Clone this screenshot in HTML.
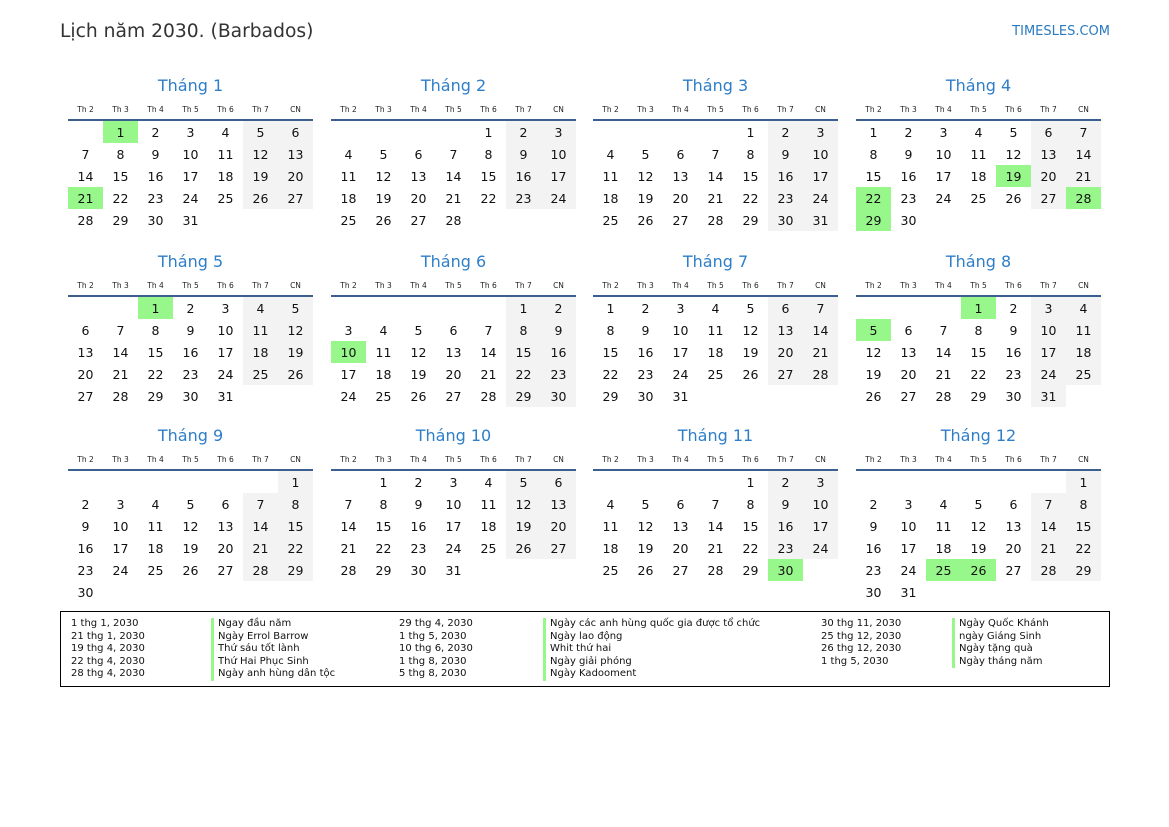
<!DOCTYPE html><html><head><meta charset="utf-8"><style>
body{margin:0;width:1169px;height:827px;background:#fff;font-family:"DejaVu Sans","Liberation Sans",sans-serif;color:#111;position:relative;overflow:hidden}
.t{position:absolute;left:60px;top:21px;font-size:18.7px;color:#333}
.s{position:absolute;right:59px;top:24px;font-size:13px;color:#2a7ac0}
.m{position:absolute;width:245px}
.m h3{margin:0;height:22px;font-weight:normal;font-size:16px;color:#2e7ec8;text-align:center;line-height:24px}
table{border-collapse:collapse;table-layout:fixed;width:245px}
th{font-weight:normal;font-size:7.5px;height:20px;padding:3px 0 0;border-bottom:2px solid #3b5f8e;vertical-align:middle;color:#222}
td{width:35px;height:22px;padding:0;text-align:center;font-size:12.5px}
td:nth-child(6):not(:empty),td:nth-child(7):not(:empty){background:#f3f3f3}
td.h,td.h:nth-child(n){background:#98f78a}
.lg{position:absolute;left:60px;top:611px;width:1048px;height:74px;border:1px solid #000;font-size:10px;line-height:12.5px}
.c{position:absolute;top:6px;white-space:nowrap}
.b{border-left:3px solid #98f78a;padding-left:4px}
</style></head><body>
<div class="t">Lịch năm 2030. (Barbados)</div><div class="s">TIMESLES.COM</div>

<div class="m" style="left:68px;top:74px"><h3>Tháng 1</h3><table><tr><th>Th 2</th><th>Th 3</th><th>Th 4</th><th>Th 5</th><th>Th 6</th><th>Th 7</th><th>CN</th></tr>
<tr><td></td><td class="h">1</td><td>2</td><td>3</td><td>4</td><td>5</td><td>6</td></tr>
<tr><td>7</td><td>8</td><td>9</td><td>10</td><td>11</td><td>12</td><td>13</td></tr>
<tr><td>14</td><td>15</td><td>16</td><td>17</td><td>18</td><td>19</td><td>20</td></tr>
<tr><td class="h">21</td><td>22</td><td>23</td><td>24</td><td>25</td><td>26</td><td>27</td></tr>
<tr><td>28</td><td>29</td><td>30</td><td>31</td><td></td><td></td><td></td></tr></table></div>

<div class="m" style="left:331px;top:74px"><h3>Tháng 2</h3><table><tr><th>Th 2</th><th>Th 3</th><th>Th 4</th><th>Th 5</th><th>Th 6</th><th>Th 7</th><th>CN</th></tr>
<tr><td></td><td></td><td></td><td></td><td>1</td><td>2</td><td>3</td></tr>
<tr><td>4</td><td>5</td><td>6</td><td>7</td><td>8</td><td>9</td><td>10</td></tr>
<tr><td>11</td><td>12</td><td>13</td><td>14</td><td>15</td><td>16</td><td>17</td></tr>
<tr><td>18</td><td>19</td><td>20</td><td>21</td><td>22</td><td>23</td><td>24</td></tr>
<tr><td>25</td><td>26</td><td>27</td><td>28</td><td></td><td></td><td></td></tr></table></div>

<div class="m" style="left:593px;top:74px"><h3>Tháng 3</h3><table><tr><th>Th 2</th><th>Th 3</th><th>Th 4</th><th>Th 5</th><th>Th 6</th><th>Th 7</th><th>CN</th></tr>
<tr><td></td><td></td><td></td><td></td><td>1</td><td>2</td><td>3</td></tr>
<tr><td>4</td><td>5</td><td>6</td><td>7</td><td>8</td><td>9</td><td>10</td></tr>
<tr><td>11</td><td>12</td><td>13</td><td>14</td><td>15</td><td>16</td><td>17</td></tr>
<tr><td>18</td><td>19</td><td>20</td><td>21</td><td>22</td><td>23</td><td>24</td></tr>
<tr><td>25</td><td>26</td><td>27</td><td>28</td><td>29</td><td>30</td><td>31</td></tr></table></div>

<div class="m" style="left:856px;top:74px"><h3>Tháng 4</h3><table><tr><th>Th 2</th><th>Th 3</th><th>Th 4</th><th>Th 5</th><th>Th 6</th><th>Th 7</th><th>CN</th></tr>
<tr><td>1</td><td>2</td><td>3</td><td>4</td><td>5</td><td>6</td><td>7</td></tr>
<tr><td>8</td><td>9</td><td>10</td><td>11</td><td>12</td><td>13</td><td>14</td></tr>
<tr><td>15</td><td>16</td><td>17</td><td>18</td><td class="h">19</td><td>20</td><td>21</td></tr>
<tr><td class="h">22</td><td>23</td><td>24</td><td>25</td><td>26</td><td>27</td><td class="h">28</td></tr>
<tr><td class="h">29</td><td>30</td><td></td><td></td><td></td><td></td><td></td></tr></table></div>

<div class="m" style="left:68px;top:250px"><h3>Tháng 5</h3><table><tr><th>Th 2</th><th>Th 3</th><th>Th 4</th><th>Th 5</th><th>Th 6</th><th>Th 7</th><th>CN</th></tr>
<tr><td></td><td></td><td class="h">1</td><td>2</td><td>3</td><td>4</td><td>5</td></tr>
<tr><td>6</td><td>7</td><td>8</td><td>9</td><td>10</td><td>11</td><td>12</td></tr>
<tr><td>13</td><td>14</td><td>15</td><td>16</td><td>17</td><td>18</td><td>19</td></tr>
<tr><td>20</td><td>21</td><td>22</td><td>23</td><td>24</td><td>25</td><td>26</td></tr>
<tr><td>27</td><td>28</td><td>29</td><td>30</td><td>31</td><td></td><td></td></tr></table></div>

<div class="m" style="left:331px;top:250px"><h3>Tháng 6</h3><table><tr><th>Th 2</th><th>Th 3</th><th>Th 4</th><th>Th 5</th><th>Th 6</th><th>Th 7</th><th>CN</th></tr>
<tr><td></td><td></td><td></td><td></td><td></td><td>1</td><td>2</td></tr>
<tr><td>3</td><td>4</td><td>5</td><td>6</td><td>7</td><td>8</td><td>9</td></tr>
<tr><td class="h">10</td><td>11</td><td>12</td><td>13</td><td>14</td><td>15</td><td>16</td></tr>
<tr><td>17</td><td>18</td><td>19</td><td>20</td><td>21</td><td>22</td><td>23</td></tr>
<tr><td>24</td><td>25</td><td>26</td><td>27</td><td>28</td><td>29</td><td>30</td></tr></table></div>

<div class="m" style="left:593px;top:250px"><h3>Tháng 7</h3><table><tr><th>Th 2</th><th>Th 3</th><th>Th 4</th><th>Th 5</th><th>Th 6</th><th>Th 7</th><th>CN</th></tr>
<tr><td>1</td><td>2</td><td>3</td><td>4</td><td>5</td><td>6</td><td>7</td></tr>
<tr><td>8</td><td>9</td><td>10</td><td>11</td><td>12</td><td>13</td><td>14</td></tr>
<tr><td>15</td><td>16</td><td>17</td><td>18</td><td>19</td><td>20</td><td>21</td></tr>
<tr><td>22</td><td>23</td><td>24</td><td>25</td><td>26</td><td>27</td><td>28</td></tr>
<tr><td>29</td><td>30</td><td>31</td><td></td><td></td><td></td><td></td></tr></table></div>

<div class="m" style="left:856px;top:250px"><h3>Tháng 8</h3><table><tr><th>Th 2</th><th>Th 3</th><th>Th 4</th><th>Th 5</th><th>Th 6</th><th>Th 7</th><th>CN</th></tr>
<tr><td></td><td></td><td></td><td class="h">1</td><td>2</td><td>3</td><td>4</td></tr>
<tr><td class="h">5</td><td>6</td><td>7</td><td>8</td><td>9</td><td>10</td><td>11</td></tr>
<tr><td>12</td><td>13</td><td>14</td><td>15</td><td>16</td><td>17</td><td>18</td></tr>
<tr><td>19</td><td>20</td><td>21</td><td>22</td><td>23</td><td>24</td><td>25</td></tr>
<tr><td>26</td><td>27</td><td>28</td><td>29</td><td>30</td><td>31</td><td></td></tr></table></div>

<div class="m" style="left:68px;top:424px"><h3>Tháng 9</h3><table><tr><th>Th 2</th><th>Th 3</th><th>Th 4</th><th>Th 5</th><th>Th 6</th><th>Th 7</th><th>CN</th></tr>
<tr><td></td><td></td><td></td><td></td><td></td><td></td><td>1</td></tr>
<tr><td>2</td><td>3</td><td>4</td><td>5</td><td>6</td><td>7</td><td>8</td></tr>
<tr><td>9</td><td>10</td><td>11</td><td>12</td><td>13</td><td>14</td><td>15</td></tr>
<tr><td>16</td><td>17</td><td>18</td><td>19</td><td>20</td><td>21</td><td>22</td></tr>
<tr><td>23</td><td>24</td><td>25</td><td>26</td><td>27</td><td>28</td><td>29</td></tr>
<tr><td>30</td><td></td><td></td><td></td><td></td><td></td><td></td></tr></table></div>

<div class="m" style="left:331px;top:424px"><h3>Tháng 10</h3><table><tr><th>Th 2</th><th>Th 3</th><th>Th 4</th><th>Th 5</th><th>Th 6</th><th>Th 7</th><th>CN</th></tr>
<tr><td></td><td>1</td><td>2</td><td>3</td><td>4</td><td>5</td><td>6</td></tr>
<tr><td>7</td><td>8</td><td>9</td><td>10</td><td>11</td><td>12</td><td>13</td></tr>
<tr><td>14</td><td>15</td><td>16</td><td>17</td><td>18</td><td>19</td><td>20</td></tr>
<tr><td>21</td><td>22</td><td>23</td><td>24</td><td>25</td><td>26</td><td>27</td></tr>
<tr><td>28</td><td>29</td><td>30</td><td>31</td><td></td><td></td><td></td></tr></table></div>

<div class="m" style="left:593px;top:424px"><h3>Tháng 11</h3><table><tr><th>Th 2</th><th>Th 3</th><th>Th 4</th><th>Th 5</th><th>Th 6</th><th>Th 7</th><th>CN</th></tr>
<tr><td></td><td></td><td></td><td></td><td>1</td><td>2</td><td>3</td></tr>
<tr><td>4</td><td>5</td><td>6</td><td>7</td><td>8</td><td>9</td><td>10</td></tr>
<tr><td>11</td><td>12</td><td>13</td><td>14</td><td>15</td><td>16</td><td>17</td></tr>
<tr><td>18</td><td>19</td><td>20</td><td>21</td><td>22</td><td>23</td><td>24</td></tr>
<tr><td>25</td><td>26</td><td>27</td><td>28</td><td>29</td><td class="h">30</td><td></td></tr></table></div>

<div class="m" style="left:856px;top:424px"><h3>Tháng 12</h3><table><tr><th>Th 2</th><th>Th 3</th><th>Th 4</th><th>Th 5</th><th>Th 6</th><th>Th 7</th><th>CN</th></tr>
<tr><td></td><td></td><td></td><td></td><td></td><td></td><td>1</td></tr>
<tr><td>2</td><td>3</td><td>4</td><td>5</td><td>6</td><td>7</td><td>8</td></tr>
<tr><td>9</td><td>10</td><td>11</td><td>12</td><td>13</td><td>14</td><td>15</td></tr>
<tr><td>16</td><td>17</td><td>18</td><td>19</td><td>20</td><td>21</td><td>22</td></tr>
<tr><td>23</td><td>24</td><td class="h">25</td><td class="h">26</td><td>27</td><td>28</td><td>29</td></tr>
<tr><td>30</td><td>31</td><td></td><td></td><td></td><td></td><td></td></tr></table></div>

<div class="lg">
<div class="c" style="left:10px">1 thg 1, 2030<br>21 thg 1, 2030<br>19 thg 4, 2030<br>22 thg 4, 2030<br>28 thg 4, 2030</div>
<div class="c b" style="left:150px">Ngay đầu năm<br>Ngày Errol Barrow<br>Thứ sáu tốt lành<br>Thứ Hai Phục Sinh<br>Ngày anh hùng dân tộc</div>
<div class="c" style="left:338px">29 thg 4, 2030<br>1 thg 5, 2030<br>10 thg 6, 2030<br>1 thg 8, 2030<br>5 thg 8, 2030</div>
<div class="c b" style="left:482px">Ngày các anh hùng quốc gia được tổ chức<br>Ngày lao động<br>Whit thứ hai<br>Ngày giải phóng<br>Ngày Kadooment</div>
<div class="c" style="left:760px">30 thg 11, 2030<br>25 thg 12, 2030<br>26 thg 12, 2030<br>1 thg 5, 2030</div>
<div class="c b" style="left:891px">Ngày Quốc Khánh<br>ngày Giáng Sinh<br>Ngày tặng quà<br>Ngày tháng năm</div>
</div>
</body></html>
